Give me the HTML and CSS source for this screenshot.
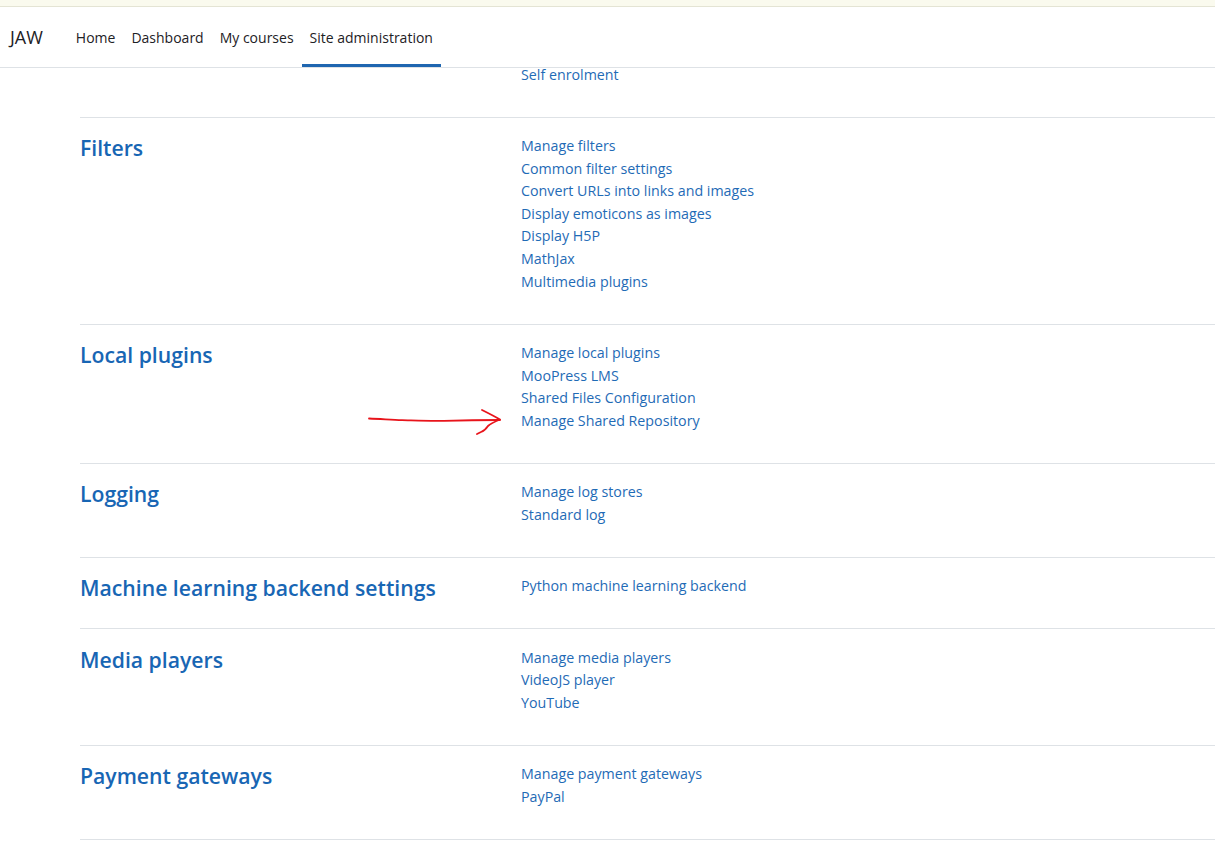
FILE: index.html
```html
<!DOCTYPE html>
<html lang="en">
<head>
    <meta charset="UTF-8" />
    <meta name="viewport" content="width=device-width, initial-scale=1.0" />
    <title>Site administration</title>
    <link rel="stylesheet" href="styles.css">
</head>
<body>
    <div class="top-strip"></div>

    <nav class="navbar">
        <a class="brand" href="#">JAW</a>
        <ul class="nav-menu">
            <li><a href="#">Home</a></li>
            <li><a href="#">Dashboard</a></li>
            <li><a href="#">My courses</a></li>
            <li><a href="#" class="active">Site administration</a></li>
        </ul>
    </nav>

    <main class="admin-list">
        <section class="admin-row first">
            <div></div>
            <ul class="links">
                <li><a href="#">Self enrolment</a></li>
            </ul>
        </section>

        <section class="admin-row">
            <h2><a href="#">Filters</a></h2>
            <ul class="links">
                <li><a href="#">Manage filters</a></li>
                <li><a href="#">Common filter settings</a></li>
                <li><a href="#">Convert URLs into links and images</a></li>
                <li><a href="#">Display emoticons as images</a></li>
                <li><a href="#">Display H5P</a></li>
                <li><a href="#">MathJax</a></li>
                <li><a href="#">Multimedia plugins</a></li>
            </ul>
        </section>

        <section class="admin-row">
            <h2><a href="#">Local plugins</a></h2>
            <ul class="links">
                <li><a href="#">Manage local plugins</a></li>
                <li><a href="#">MooPress LMS</a></li>
                <li><a href="#">Shared Files Configuration</a></li>
                <li>
                    <svg class="scribble" width="140" height="34" viewBox="0 0 140 34" fill="none" stroke="#e8141b" stroke-width="1.8" stroke-linecap="round" stroke-linejoin="round">
                        <path d="M1 11.5 C 14 12, 24 13, 34 13.2 S 62 14.2, 76 13.8 S 104 13, 132 13" />
                        <path d="M114 3 C 120 6, 126 9, 132 12.5 C 126 15, 122 17, 120 19 C 118 22, 116 24, 113 25 L 109 27" />
                    </svg>
                    <a href="#">Manage Shared Repository</a>
                </li>
            </ul>
        </section>

        <section class="admin-row">
            <h2><a href="#">Logging</a></h2>
            <ul class="links">
                <li><a href="#">Manage log stores</a></li>
                <li><a href="#">Standard log</a></li>
            </ul>
        </section>

        <section class="admin-row">
            <h2><a href="#">Machine learning backend settings</a></h2>
            <ul class="links">
                <li><a href="#">Python machine learning backend</a></li>
            </ul>
        </section>

        <section class="admin-row">
            <h2><a href="#">Media players</a></h2>
            <ul class="links">
                <li><a href="#">Manage media players</a></li>
                <li><a href="#">VideoJS player</a></li>
                <li><a href="#">YouTube</a></li>
            </ul>
        </section>

        <section class="admin-row last">
            <h2><a href="#">Payment gateways</a></h2>
            <ul class="links">
                <li><a href="#">Manage payment gateways</a></li>
                <li><a href="#">PayPal</a></li>
            </ul>
        </section>
    </main>
</body>
</html>
```

FILE: styles.css
```css
/* reset */
*, ::before, ::after { box-sizing: border-box; }
html { font-family: 'Open Sans', 'Noto Sans', sans-serif; }
body { margin: 0; background: #ffffff; color: #1d2125; overflow: hidden; }
ul { list-style: none; margin: 0; padding: 0; }
a { text-decoration: none; }

/* top strip */
.top-strip { height: 7px; background: #fafaee; border-bottom: 1px solid #e4e4d4; }

/* navbar */
.navbar { display: flex; align-items: stretch; height: 61px; border-bottom: 1px solid #dee2e6; }
.brand { display: flex; align-items: center; padding: 0 10px; margin-right: 18px; font-size: 18px; color: #1d2125; }
.nav-menu { display: flex; align-items: stretch; margin-left: -3px; }
.nav-menu a { display: flex; align-items: center; height: 100%; padding: 0 8px; font-size: 14px; color: #1d2125; border-bottom: 3px solid transparent; padding-top: 3px; }
.nav-menu a.active { border-bottom-color: #1f66b0; }

/* admin sections */
.admin-list { padding-left: 80px; }
.admin-row { display: grid; grid-template-columns: 441px 1fr; padding: 17.5px 0 30.3px; border-top: 1px solid #dee2e6; }
.admin-row.first { border-top: 0; padding-top: 0; margin-top: -4px; padding-bottom: 30px; }
.admin-row.last { border-bottom: 1px solid #dee2e6; }
.admin-row h2 { margin: 0 0 -4px; font-size: 21.2px; font-weight: 600; line-height: 26px; }
.admin-row h2 a { color: #1866b4; }
.links li { position: relative; font-size: 14.25px; line-height: 22.6px; }
.links a { color: #1f6bb6; }

/* annotation */
.scribble { position: absolute; left: -153px; top: -3px; }
```
